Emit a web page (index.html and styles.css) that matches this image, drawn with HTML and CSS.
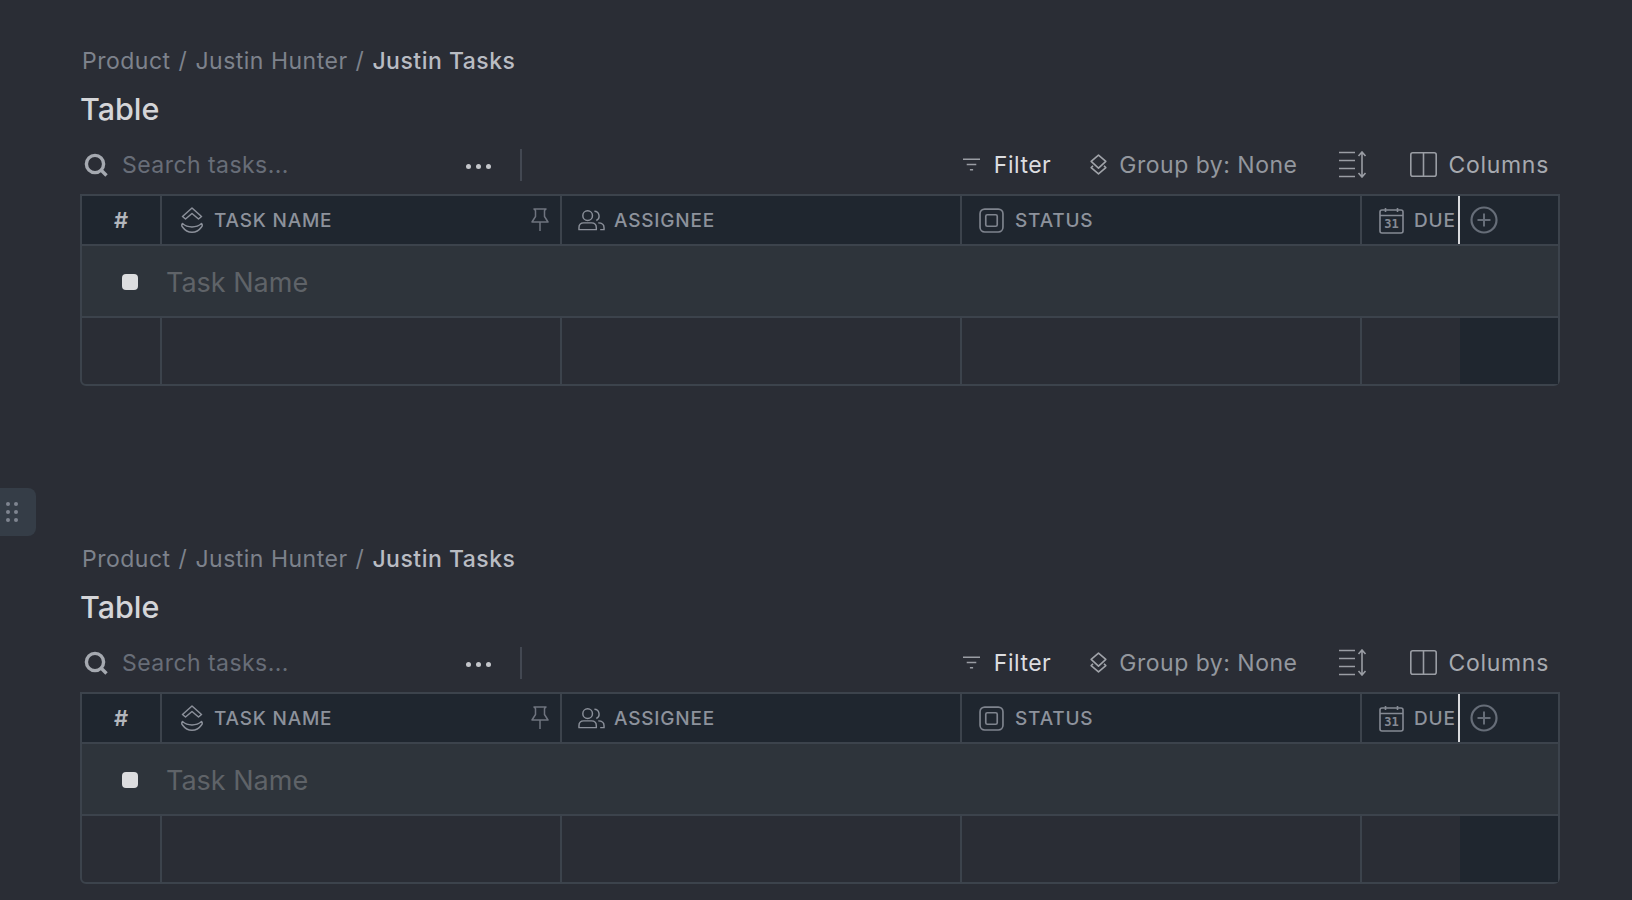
FILE: index.html
```html
<!DOCTYPE html>
<html lang="en">
<head>
<meta charset="utf-8">
<title>Table</title>
<link rel="stylesheet" href="styles.css">
</head>
<body>
<svg class="sprite" width="0" height="0" aria-hidden="true">
  <symbol id="i-search" viewBox="0 0 24 24"><circle cx="11" cy="11" r="8.6" fill="none" stroke="currentColor" stroke-width="3.4"/><path d="M16.500 16.500l6 6" fill="none" stroke="currentColor" stroke-width="3.4"/></symbol>
  <symbol id="i-filter" viewBox="0 0 16 12"><path d="M0 1h16M3.5 6h9M6.5 11h3" fill="none" stroke="currentColor" stroke-width="1.3"/></symbol>
  <symbol id="i-group" viewBox="0 0 16 20"><path d="M8 1l7 6-7 6.500-7-6.500z" fill="none" stroke="currentColor" stroke-width="1.500" stroke-linejoin="round"/><path d="M2.800 11.200L1 13l7 6 7-6-1.800-1.800" fill="none" stroke="currentColor" stroke-width="1.500" stroke-linejoin="round"/></symbol>
  <symbol id="i-sort" viewBox="0 0 29 27"><path d="M0 1.500h16M0 9.500h16M0 17.500h16M0 25.500h16M23 1.500v24M19.500 5L23 1l3.500 4M19.500 22l3.500 4 3.500-4" fill="none" stroke="currentColor" stroke-width="1.600"/></symbol>
  <symbol id="i-columns" viewBox="0 0 27 25"><rect x=".8" y=".8" width="25.400" height="23.400" rx="2" fill="none" stroke="currentColor" stroke-width="1.600"/><path d="M13.500 1v23" stroke="currentColor" stroke-width="1.600"/></symbol>
  <symbol id="i-task" viewBox="0 0 22 27"><path d="M11 1l9.500 8.500-3 2.500L11 6.500 4.500 12l-3-2.500z" fill="none" stroke="currentColor" stroke-width="1.500" stroke-linejoin="round"/><path d="M1.500 16.500c5 4.500 14 4.500 19 0 1 1 1 2.500 0 3.500-5 7-14 7-19 0-1-1-1-2.500 0-3.500z" fill="none" stroke="currentColor" stroke-width="1.500" stroke-linejoin="round"/></symbol>
  <symbol id="i-pin" viewBox="0 0 18 24"><path d="M3 1h12l-1.500 1.500v6L17 14H1l3.500-5.500v-6zM9 14v9" fill="none" stroke="currentColor" stroke-width="1.500" stroke-linejoin="round"/></symbol>
  <symbol id="i-people" viewBox="0 0 28 22"><circle cx="10" cy="6.500" r="5" fill="none" stroke="currentColor" stroke-width="1.500"/><path d="M1 21v-2c0-3 2-5 5-5h8c3 0 5 2 5 5v2z" fill="none" stroke="currentColor" stroke-width="1.500" stroke-linejoin="round"/><path d="M17 2a5 5 0 0 1 2 9.500M21 14c4 0 6 2 6 5v2h-4" fill="none" stroke="currentColor" stroke-width="1.500"/></symbol>
  <symbol id="i-status" viewBox="0 0 24 24"><rect x="1" y="1" width="22" height="22" rx="4.500" fill="none" stroke="currentColor" stroke-width="1.600"/><rect x="6.500" y="6.500" width="11" height="11" rx="1.500" fill="none" stroke="currentColor" stroke-width="1.600"/></symbol>
  <symbol id="i-cal" viewBox="0 0 25 27"><rect x="1" y="3" width="23" height="23" rx="2" fill="none" stroke="currentColor" stroke-width="1.600"/><path d="M1 8.500h23M6.500 1v4M18.500 1v4" fill="none" stroke="currentColor" stroke-width="1.600"/></symbol>
  <symbol id="i-plus" viewBox="0 0 28 28"><circle cx="14" cy="14" r="12.500" fill="none" stroke="currentColor" stroke-width="2.200"/><path d="M14 7.500v13M7.500 14h13" stroke="currentColor" stroke-width="2"/></symbol>
</svg>

<div class="handle"><span></span><span></span><span></span><span></span><span></span><span></span></div>

<section class="block">
  <div class="crumbs"><span>Product</span><span>/</span><span>Justin Hunter</span><span>/</span><span class="current">Justin Tasks</span></div>
  <h1 class="title">Table</h1>
  <div class="toolbar">
    <div class="search">
      <svg class="ic-search"><use href="#i-search"/></svg>
      <span class="search-text">Search tasks...</span>
      <span class="dots"><i></i><i></i><i></i></span>
    </div>
    <div class="actions">
      <span class="act act-filter"><svg class="ic-filter"><use href="#i-filter"/></svg>Filter</span>
      <span class="act act-group"><svg class="ic-group"><use href="#i-group"/></svg>Group by: None</span>
      <svg class="ic-sort"><use href="#i-sort"/></svg>
      <span class="act act-columns"><svg class="ic-columns"><use href="#i-columns"/></svg>Columns</span>
    </div>
  </div>
  <div class="table">
    <div class="head">
      <div class="hc hash">#</div>
      <div class="hc name"><svg class="ic-task"><use href="#i-task"/></svg>TASK NAME<svg class="ic-pin"><use href="#i-pin"/></svg></div>
      <div class="hc"><svg class="ic-people"><use href="#i-people"/></svg>ASSIGNEE</div>
      <div class="hc"><svg class="ic-status"><use href="#i-status"/></svg>STATUS</div>
      <div class="hc due"><span class="cal"><svg class="ic-cal"><use href="#i-cal"/></svg><b>31</b></span>DUE</div>
      <div class="hc add"><svg class="ic-plus"><use href="#i-plus"/></svg></div>
    </div>
    <div class="input-row"><span class="check"></span><span class="placeholder">Task Name</span></div>
    <div class="empty"><div></div><div></div><div></div><div></div><div></div><div class="fill"></div></div>
  </div>
</section>

<section class="block">
  <div class="crumbs"><span>Product</span><span>/</span><span>Justin Hunter</span><span>/</span><span class="current">Justin Tasks</span></div>
  <h1 class="title">Table</h1>
  <div class="toolbar">
    <div class="search">
      <svg class="ic-search"><use href="#i-search"/></svg>
      <span class="search-text">Search tasks...</span>
      <span class="dots"><i></i><i></i><i></i></span>
    </div>
    <div class="actions">
      <span class="act act-filter"><svg class="ic-filter"><use href="#i-filter"/></svg>Filter</span>
      <span class="act act-group"><svg class="ic-group"><use href="#i-group"/></svg>Group by: None</span>
      <svg class="ic-sort"><use href="#i-sort"/></svg>
      <span class="act act-columns"><svg class="ic-columns"><use href="#i-columns"/></svg>Columns</span>
    </div>
  </div>
  <div class="table">
    <div class="head">
      <div class="hc hash">#</div>
      <div class="hc name"><svg class="ic-task"><use href="#i-task"/></svg>TASK NAME<svg class="ic-pin"><use href="#i-pin"/></svg></div>
      <div class="hc"><svg class="ic-people"><use href="#i-people"/></svg>ASSIGNEE</div>
      <div class="hc"><svg class="ic-status"><use href="#i-status"/></svg>STATUS</div>
      <div class="hc due"><span class="cal"><svg class="ic-cal"><use href="#i-cal"/></svg><b>31</b></span>DUE</div>
      <div class="hc add"><svg class="ic-plus"><use href="#i-plus"/></svg></div>
    </div>
    <div class="input-row"><span class="check"></span><span class="placeholder">Task Name</span></div>
    <div class="empty"><div></div><div></div><div></div><div></div><div></div><div class="fill"></div></div>
  </div>
</section>
</body>
</html>
```
FILE: styles.css
```css
* { box-sizing: border-box; }
html, body { margin: 0; height: 900px; overflow: hidden; }
body {
  background: #2a2d35;
  font-family: Inter, "Liberation Sans", sans-serif;
  padding: 45px 72px 0 80px;
  color: #8b909a;
}
.sprite { position: absolute; }
svg { display: block; flex: none; }

.block + .block { margin-top: 157px; }

.crumbs { display: flex; gap: 8px; height: 32px; align-items: center; font-size: 23px; letter-spacing: .5px; padding-left: 2px; color: #7d828c; }
.crumbs .current { color: #b9bcc3; font-weight: 500; }

.title { margin: 12px 0 0; height: 40px; line-height: 40px; font-size: 30.500px; font-weight: 500; color: #d4d5d8; }

.toolbar { display: flex; justify-content: space-between; align-items: center; height: 59px; margin-top: 6px; }
.search { display: flex; align-items: center; width: 442px; height: 32px; border-right: 2px solid #434852; color: #686d78; font-size: 23px; letter-spacing: .45px; }
.ic-search { width: 24px; height: 24px; margin-left: 4px; color: #a5a9b0; }
.search-text { margin-left: 14px; }
.dots { display: flex; gap: 5px; margin-left: auto; margin-right: 29px; padding-top: 4px; }
.dots i { width: 5px; height: 5px; border-radius: 50%; background: #c4c6cb; }

.actions { display: flex; align-items: center; font-size: 23px; letter-spacing: .5px; margin-right: 11px; }
.act { display: flex; align-items: center; }
.act-filter { color: #dcdde0; }
.act-group { color: #93979e; margin-left: 39px; }
.act-columns { color: #a6a9af; margin-left: 42px; letter-spacing: .7px; }
.ic-filter { width: 17px; height: 13px; margin-right: 14px; color: #9a9da4; }
.ic-group { width: 17px; height: 21px; margin-right: 12px; color: #a0a3a9; }
.ic-sort { width: 29px; height: 27px; margin-left: 42px; color: #9a9da4; }
.ic-columns { width: 27px; height: 25px; margin-right: 11px; color: #9a9da4; }

.table { width: 1480px; border: 2px solid #3c434c; border-radius: 0 0 6px 6px; }
.head, .empty { display: grid; grid-template-columns: 80px 400px 400px 400px 98px 1fr; }
.head { height: 50px; background: #1f262f; border-bottom: 2px solid #3c434c; }
.hc { display: flex; align-items: center; border-right: 2px solid #3c434c; padding-left: 16px; font-size: 19px; font-weight: 500; letter-spacing: .8px; color: #8d929c; }
.hash { justify-content: center; padding-left: 0; font-size: 22px; font-weight: 600; color: #b3b6bc; letter-spacing: 0; }
.name { position: relative; padding-left: 19px; }
.ic-task { width: 22px; height: 27px; margin-right: 11px; color: #8b909a; }
.ic-pin { width: 18px; height: 24px; margin-left: auto; margin-right: 11px; color: #6f747f; }
.ic-people { width: 27px; height: 22px; margin-right: 9px; color: #8b909a; }
.ic-status { width: 25px; height: 25px; margin-right: 11px; margin-left: 1px; color: #7f848e; }
.due { overflow: hidden; white-space: nowrap; border-right: 2px solid #d9dadd; padding-left: 17px; }
.cal { position: relative; margin-right: 10px; width: 25px; height: 27px; flex: none; color: #858a94; }
.ic-cal { width: 25px; height: 27px; }
.cal b { position: absolute; left: 0; right: 0; top: 10px; font: 700 12px/14px "DejaVu Sans Mono", monospace; text-align: center; letter-spacing: 0; }
.add { border-right: 0; padding-left: 10px; }
.ic-plus { width: 28px; height: 28px; color: #666d78; }

.input-row { display: flex; align-items: center; height: 72px; background: #2e343b; border-bottom: 2px solid #3c434c; }
.check { width: 16px; height: 16px; border-radius: 4px; background: #dcdddf; margin: 2px 0 0 40px; }
.placeholder { margin: 2px 0 0 28px; font-size: 27px; color: #5f6368; }

.empty { height: 66px; }
.empty > div { border-right: 2px solid #3c434c; }
.empty > div:nth-child(5) { border-right: 0; }
.empty > .fill { background: #1f262f; border-right: 0; }

.handle { position: absolute; left: 0; top: 488px; width: 36px; height: 48px; background: #353d47; border-radius: 0 8px 8px 0; display: grid; grid-template-columns: 4px 4px; gap: 4px; align-content: center; padding-left: 6px; }
.handle span { width: 4px; height: 4px; border-radius: 50%; background: #7f8590; }
```
